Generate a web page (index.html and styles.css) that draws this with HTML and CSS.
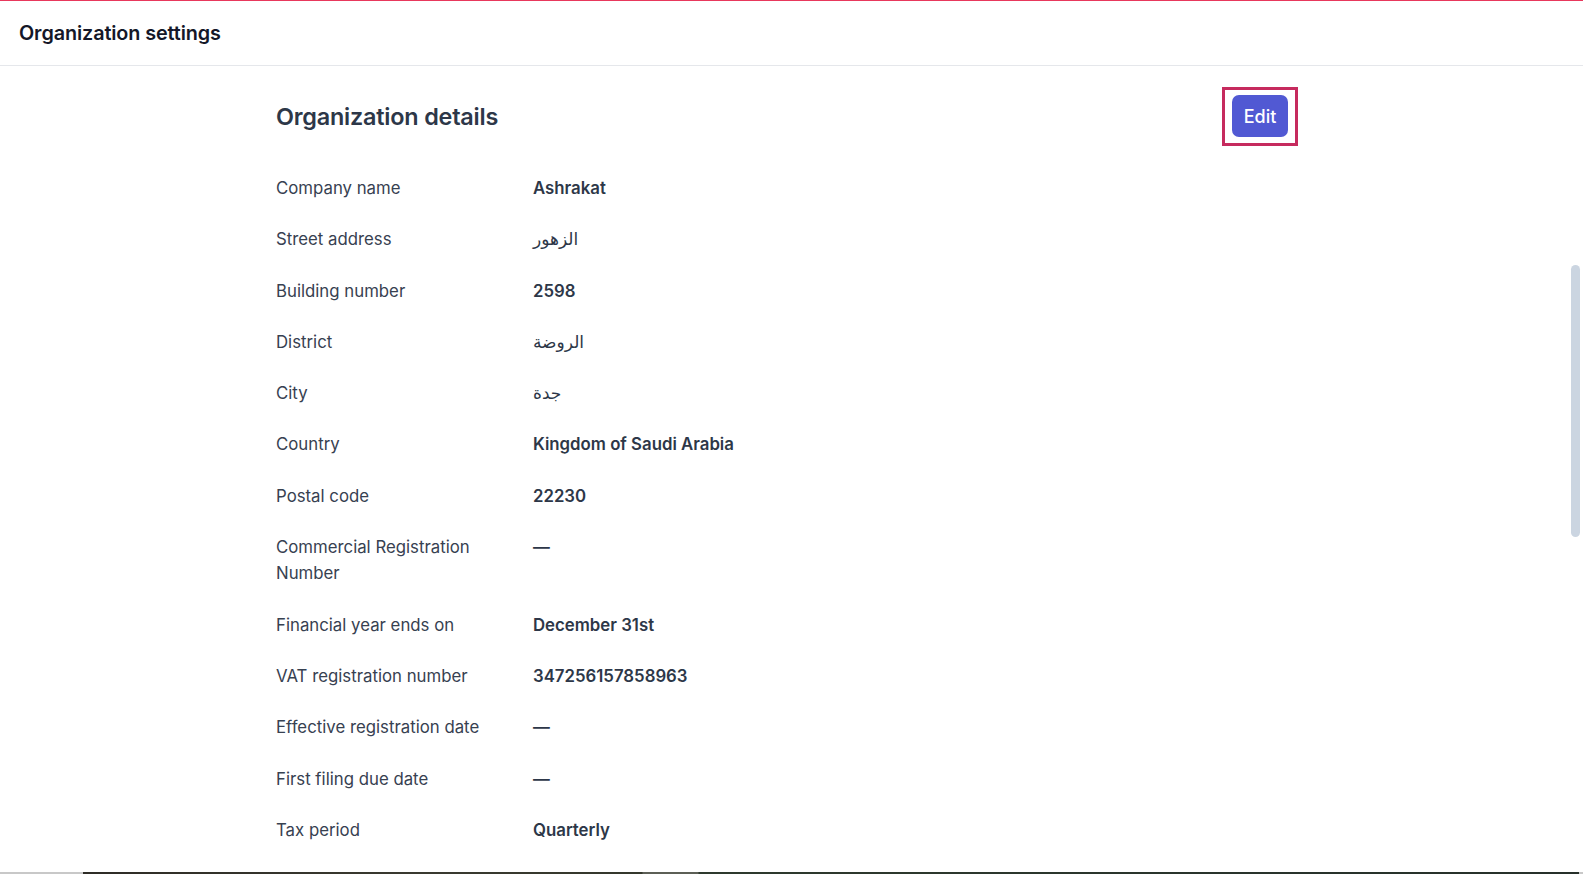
FILE: index.html
```html
<!DOCTYPE html>
<html lang="en">
<head>
<meta charset="utf-8">
<title>Organization settings</title>
<link rel="stylesheet" href="styles.css">
</head>
<body>
  <div class="app">
    <header class="topbar">
      <h1 class="topbar-title">Organization settings</h1>
    </header>
    <main class="main">
      <section class="details">
        <div class="details-head">
          <h2 class="details-title">Organization details</h2>
          <span class="focus-ring"><button class="btn-edit" type="button">Edit</button></span>
        </div>
        <dl class="fields">
          <dt>Company name</dt><dd>Ashrakat</dd>
          <dt>Street address</dt><dd class="ar" dir="rtl">الزهور</dd>
          <dt>Building number</dt><dd>2598</dd>
          <dt>District</dt><dd class="ar" dir="rtl">الروضة</dd>
          <dt>City</dt><dd class="ar" dir="rtl">جدة</dd>
          <dt>Country</dt><dd>Kingdom of Saudi Arabia</dd>
          <dt>Postal code</dt><dd>22230</dd>
          <dt>Commercial Registration Number</dt><dd>—</dd>
          <dt>Financial year ends on</dt><dd>December 31st</dd>
          <dt>VAT registration number</dt><dd>347256157858963</dd>
          <dt>Effective registration date</dt><dd>—</dd>
          <dt>First filing due date</dt><dd>—</dd>
          <dt>Tax period</dt><dd>Quarterly</dd>
        </dl>
      </section>
    </main>
    <div class="scroll-thumb"></div>
    <div class="taskbar-edge"></div>
  </div>
</body>
</html>
```
FILE: styles.css
```css
* { box-sizing: border-box; }

html, body {
  margin: 0;
  padding: 0;
  height: 100%;
  overflow: hidden;
  background: #ffffff;
  font-family: Inter, "Noto Sans", "Liberation Sans", sans-serif;
}

.app {
  position: relative;
  height: 100vh;
  border-top: 1px solid #e8385c;
  overflow: hidden;
}

.topbar {
  height: 65px;
  border-bottom: 1px solid #e5e7eb;
  display: flex;
  align-items: center;
  padding: 0 19px;
}

.topbar-title {
  margin: 0;
  font-size: 19.8px;
  font-weight: 600;
  color: #141728;
  letter-spacing: -0.1px;
}

.main {
  padding: 0 9px 0 0;
}

.details {
  width: 1022px;
  margin: 0 auto;
}

.details-head {
  display: flex;
  justify-content: space-between;
  align-items: center;
  height: 98px;
  padding-top: 3px;
  margin-bottom: 11px;
}

.details-title {
  margin: 0;
  font-size: 23.4px;
  font-weight: 600;
  color: #2d3748;
  letter-spacing: -0.2px;
}

/* square focus frame drawn around the edit button */
.focus-ring {
  display: inline-flex;
  border: 3px solid #c62a5e;
  padding: 5px 7px 6px 7px;
}

.btn-edit {
  width: 56px;
  height: 42px;
  border: 0;
  border-radius: 7px;
  background: #5159d3;
  color: #ffffff;
  font-family: inherit;
  font-size: 18px;
  font-weight: 500;
  cursor: pointer;
}

.fields {
  margin: 0;
  display: grid;
  grid-template-columns: 241px 1fr;
  column-gap: 16px;
  row-gap: 25px;
  font-size: 16.8px;
  line-height: 26.3px;
}

.fields dt {
  color: #374151;
  font-weight: 400;
}

.fields dd {
  margin: 0;
  color: #2d3748;
  font-weight: 600;
}

.fields dd.ar {
  text-align: left;
  justify-self: start;
  font-weight: 400;
  font-size: 17px;
  font-family: "Noto Sans", "DejaVu Sans", sans-serif;
}

.scroll-thumb {
  position: absolute;
  right: 3px;
  top: 264px;
  width: 9px;
  height: 272px;
  border-radius: 5px;
  background: #cbd5e1;
}

.taskbar-edge {
  position: absolute;
  left: 0;
  right: 0;
  bottom: 0;
  height: 2px;
  background: linear-gradient(to right,
    #c8c8c8 0, #c8c8c8 83px,
    #2e2c26 83px, #3a3a30 420px, #34382c 642px,
    #5c5f56 643px, #5c5f56 698px,
    #2e3a2e 699px, #26302a 1579px,
    #c8c8c8 1579px);
}
```
